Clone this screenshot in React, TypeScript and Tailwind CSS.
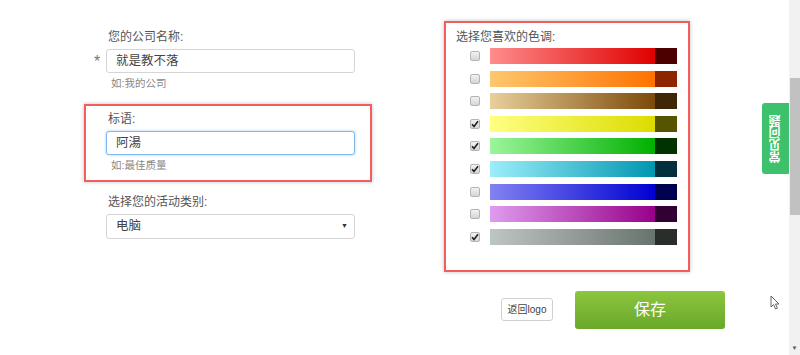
import React from 'react';

const tones = [
  { from: '#ff8c8c', to: '#e00000', dark: '#4d0000', checked: false },
  { from: '#fdc86e', to: '#ff7200', dark: '#8c2500', checked: false },
  { from: '#e8d09c', to: '#7c4a08', dark: '#3e2606', checked: false },
  { from: '#ffff82', to: '#dcdc00', dark: '#555500', checked: true },
  { from: '#9cf59c', to: '#00b000', dark: '#003300', checked: true },
  { from: '#9ceefa', to: '#0096b0', dark: '#00303c', checked: true },
  { from: '#8282f2', to: '#0000d2', dark: '#000050', checked: false },
  { from: '#de9cee', to: '#98008a', dark: '#330033', checked: false },
  { from: '#bec6c4', to: '#69736d', dark: '#2a2e2b', checked: true },
];

const font = { fontFamily: '"Liberation Sans", "Noto Sans CJK SC", sans-serif' };

const Check = ({ checked }: { checked: boolean }) => (
  <div className="w-[10px] h-[10px] rounded-[2px] border border-[#b4b4b4] bg-gradient-to-b from-[#f2f2f2] to-[#d6d6d6] flex items-center justify-center">
    {checked && (
      <svg width="8" height="8" viewBox="0 0 8 8">
        <path d="M1 4.2 L3 6.4 L7 1.2" stroke="#222" strokeWidth="1.6" fill="none" />
      </svg>
    )}
  </div>
);

const Field = ({
  label,
  value,
  hint,
  star,
  focus,
  boxed,
}: {
  label: string;
  value: string;
  hint: string;
  star?: boolean;
  focus?: boolean;
  boxed?: boolean;
}) => (
  <div
    className={
      'w-[288px] border-2 pt-[5px] pb-[8px] pl-[20px] pr-[15px] ' +
      (boxed ? 'border-[#f35d5d] shadow-[0_0_4px_rgba(0,0,0,0.25)]' : 'border-transparent')
    }
  >
    <div className="h-[16px] leading-[16px] text-[12px] text-[#555] ml-[2px]">{label}</div>
    <div className="relative mt-[4px]">
      {star && <span className="absolute left-[-12px] top-[1px] text-[16px] text-[#777]">*</span>}
      <div
        className={
          'h-[24px] w-[249px] rounded-[3px] border px-[9px] flex items-center text-[12.5px] text-[#444] bg-white ' +
          (focus ? 'border-[#7fb8ec] shadow-[0_0_3px_rgba(102,175,233,0.6)]' : 'border-[#d5d5d5]')
        }
      >
        {value}
      </div>
    </div>
    <div className="h-[14px] leading-[14px] mt-[3px] ml-[5px] text-[10.5px] text-[#888]">{hint}</div>
  </div>
);

export default function App() {
  return (
    <div className="w-[800px] h-[355px] bg-white flex overflow-hidden" style={font}>
      <div className="relative flex-1 flex pt-[22px] pl-[84px]">
        <div className="flex flex-col">
          <Field label="您的公司名称:" value="就是教不落" hint="如:我的公司" star />
          <div className="mt-[4px]">
            <Field label="标语:" value="阿湯" hint="如:最佳质量" focus boxed />
          </div>
          <div className="w-[288px] mt-[7px] pt-[5px] pl-[22px]">
            <div className="h-[16px] leading-[16px] text-[12px] text-[#555] ml-[2px]">选择您的活动类别:</div>
            <div className="mt-[4px] h-[25px] w-[249px] rounded-[3px] border border-[#d5d5d5] pl-[9px] pr-[6px] flex items-center justify-between text-[12.5px] text-[#444]">
              <span>电脑</span>
              <span className="text-[7px] text-[#333]">▼</span>
            </div>
          </div>
        </div>

        <div className="ml-[72px] -mt-[1px] flex flex-col">
          <div className="w-[246px] border-2 border-[#f35d5d] shadow-[0_0_4px_rgba(0,0,0,0.25)] pt-[6px] pl-[10px] pr-[11px] pb-[25px]">
            <div className="h-[16px] leading-[16px] text-[12px] text-[#555]">选择您喜欢的色调:</div>
            <div className="mt-[3px] flex flex-col gap-[6.6px]">
              {tones.map((t, i) => (
                <div key={i} className="flex items-center pl-[14px] gap-[10px]">
                  <Check checked={t.checked} />
                  <div className="flex h-[16px] w-[187px] outline outline-1 outline-white/60">
                    <div
                      className="flex-1 h-full"
                      style={{ background: `linear-gradient(to right, ${t.from}, ${t.to})` }}
                    />
                    <div className="w-[22px] h-full" style={{ background: t.dark }} />
                  </div>
                </div>
              ))}
            </div>
          </div>
          <div className="mt-[19px] ml-[57px] flex items-center gap-[22px]">
            <div className="w-[52px] h-[23px] rounded-[3px] border border-[#d0d0d0] flex items-center justify-center text-[10px] text-[#444]">
              返回logo
            </div>
            <div className="w-[150px] h-[38px] rounded-[3px] bg-gradient-to-b from-[#8dc63f] to-[#69a82a] flex items-center justify-center text-[16px] text-white">
              保存
            </div>
          </div>
        </div>

        <div className="absolute right-0 top-[103px] w-[27px] h-[71px] rounded-l-[3px] bg-[#3ec16c] flex items-center justify-center">
          <span className="[writing-mode:vertical-rl] rotate-180 text-[12px] font-bold text-white">
            常见问题
          </span>
        </div>

        <svg className="absolute left-[770px] top-[295px]" width="12" height="16" viewBox="0 0 12 16">
          <path d="M1 1 L1 12 L3.6 9.6 L5.6 14 L7.4 13.2 L5.5 9 L9 9 Z" fill="white" stroke="#555" strokeWidth="0.9" />
        </svg>
      </div>

      <div className="w-[11px] h-full bg-[#f1f1f1] flex flex-col items-center">
        <div className="mt-[78px] w-[10px] h-[137px] bg-[#c1c1c1]" />
        <div className="mt-auto mb-[4px] text-[6px] leading-none text-[#555]">▼</div>
      </div>
    </div>
  );
}
